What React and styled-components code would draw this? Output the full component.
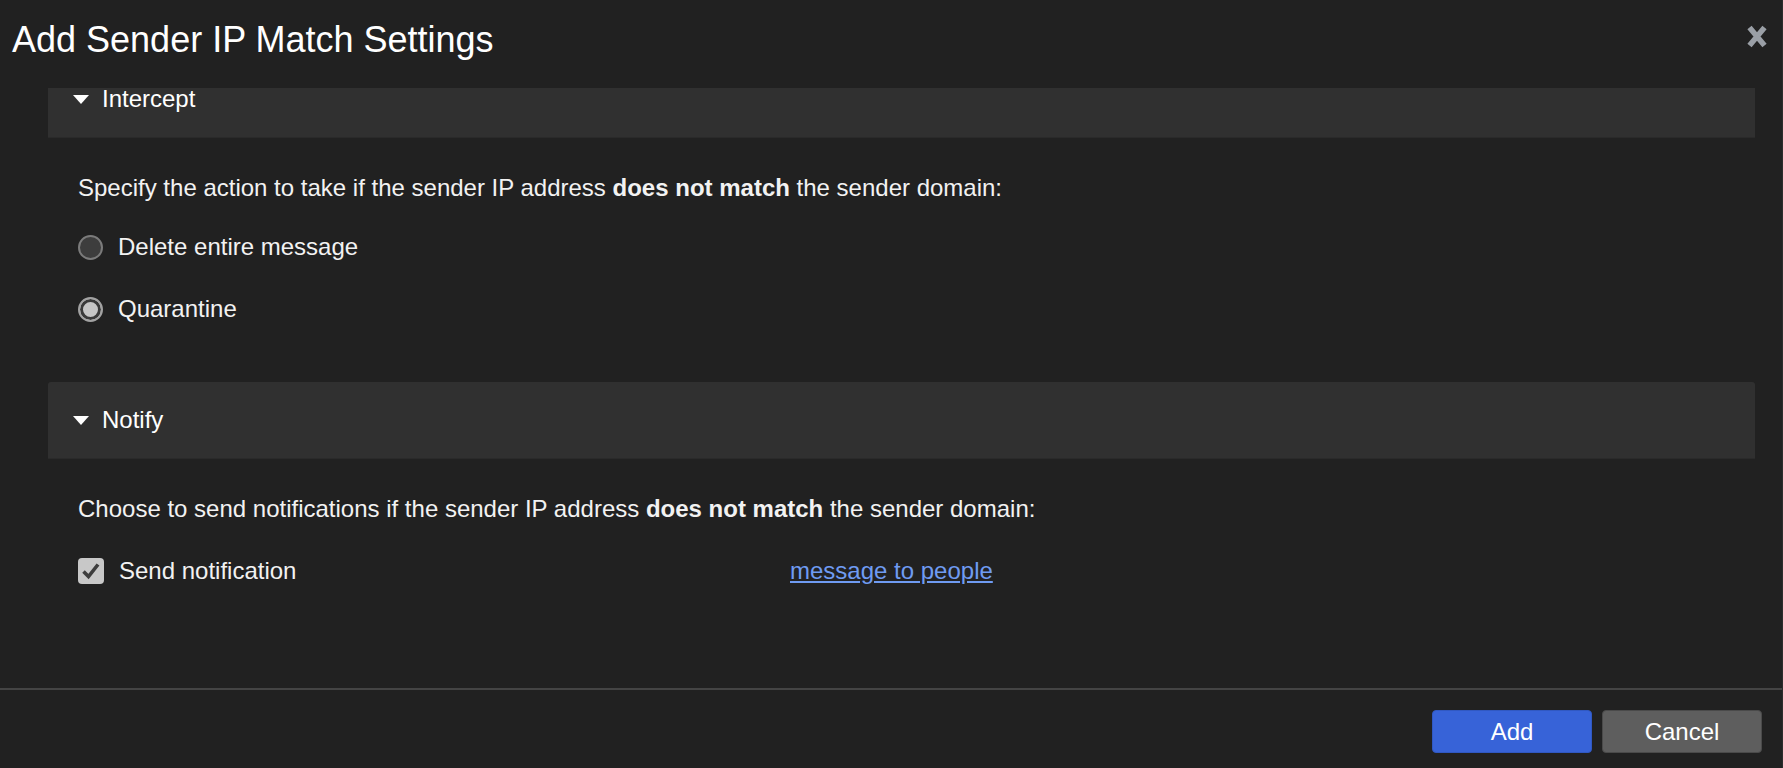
import React from 'react';
import styled, { createGlobalStyle, css } from 'styled-components';

const GlobalStyle = createGlobalStyle`
  html, body {
    margin: 0;
    padding: 0;
    background: #212121;
  }
  body {
    font-family: "Liberation Sans", Arial, sans-serif;
    color: #f2f2f2;
  }
`;

const Dialog = styled.div`
  height: 100vh;
  display: flex;
  flex-direction: column;
  background: #212121;
  border-right: 1px solid #2c2c2c;
  box-sizing: border-box;
`;

const Header = styled.header`
  height: 88px;
  flex: none;
  display: flex;
  justify-content: space-between;
  align-items: flex-start;
  padding: 19px 14px 0 12px;
  box-sizing: border-box;
`;

const Title = styled.h1`
  margin: 0;
  font-size: 36px;
  line-height: 42px;
  font-weight: 400;
  color: #ffffff;
`;

const CloseButton = styled.button`
  margin-top: 5px;
  width: 22px;
  height: 25px;
  padding: 0;
  border: 0;
  background: none;
  cursor: pointer;
  svg {
    display: block;
  }
`;

const Body = styled.div`
  flex: 1;
  overflow: hidden;
  padding: 0 27px 0 48px;
`;

const Sections = styled.div`
  margin-top: -27px;
`;

const SectionHeader = styled.div`
  height: 77px;
  display: flex;
  align-items: center;
  gap: 13px;
  padding-left: 25px;
  background: #303030;
  border-radius: 3px 3px 0 0;
  border-bottom: 1px solid #2a2a2a;
  box-sizing: border-box;
  font-size: 24px;
  line-height: 24px;
  color: #ffffff;
`;

const Caret = styled.span`
  width: 0;
  height: 0;
  border-left: 8px solid transparent;
  border-right: 8px solid transparent;
  border-top: 9px solid #ffffff;
`;

const SectionBody = styled.div`
  display: flex;
  flex-direction: column;
  gap: 28px;
  padding: 36px 0 ${(p) => p.$bottom}px 30px;
`;

const Intro = styled.p`
  margin: 0;
  font-size: 24px;
  line-height: 28px;
  strong {
    font-weight: 700;
  }
`;

const Option = styled.label`
  height: 34px;
  display: flex;
  align-items: center;
  gap: 15px;
  font-size: 24px;
`;

const Radio = styled.span`
  width: 25px;
  height: 25px;
  border-radius: 50%;
  box-sizing: border-box;
  ${(p) =>
    p.$checked
      ? css`
          border: 2px solid #a2a2a2;
          background: #c6c6c6;
          box-shadow: inset 0 0 0 3px #3a3a3a;
        `
      : css`
          border: 2px solid #7b7b7b;
          background: #3d3d3d;
        `}
`;

const Checkbox = styled.span`
  width: 26px;
  height: 26px;
  border-radius: 4px;
  background: #c8c8c8;
  display: flex;
  align-items: center;
  justify-content: center;
`;

const NotifyRow = styled.div`
  margin-top: 3px;
  display: grid;
  grid-template-columns: 712px auto;
  align-items: center;
`;

const Link = styled.a`
  font-size: 24px;
  color: #6f9bf2;
  text-decoration: underline;
  cursor: pointer;
`;

const Footer = styled.footer`
  height: 80px;
  flex: none;
  border-top: 2px solid #444444;
  box-sizing: border-box;
  display: flex;
  justify-content: flex-end;
  align-items: flex-start;
  gap: 10px;
  padding: 20px 20px 0 0;
`;

const Button = styled.button`
  width: 160px;
  height: 43px;
  border-radius: 4px;
  font-family: "Liberation Sans", Arial, sans-serif;
  font-size: 24px;
  color: #ffffff;
  cursor: pointer;
  background: ${(p) => (p.$primary ? '#3763d8' : '#5e5e5e')};
  border: 1px solid ${(p) => (p.$primary ? '#3058c2' : '#4a4a4a')};
`;

const CloseIcon = () => (
  <svg width="22" height="25" viewBox="0 0 22 25">
    <path d="M3.5 3.5 L18.5 21.5 M18.5 3.5 L3.5 21.5" stroke="#9a9fa6" strokeWidth="5.5" />
  </svg>
);

const CheckIcon = () => (
  <svg width="22" height="22" viewBox="0 0 22 22">
    <path d="M3.5 11.5 L8.5 16.5 L18 4.5" fill="none" stroke="#3d3d3d" strokeWidth="3.6" />
  </svg>
);

const App = () => {
  const actions = [
    { label: 'Delete entire message', checked: false },
    { label: 'Quarantine', checked: true },
  ];

  return (
    <>
      <GlobalStyle />
      <Dialog>
        <Header>
          <Title>Add Sender IP Match Settings</Title>
          <CloseButton aria-label="Close">
            <CloseIcon />
          </CloseButton>
        </Header>

        <Body>
          <Sections>
            <section>
              <SectionHeader>
                <Caret />
                <span>Intercept</span>
              </SectionHeader>
              <SectionBody $bottom={56}>
                <Intro>
                  Specify the action to take if the sender IP address <strong>does not match</strong> the sender domain:
                </Intro>
                {actions.map(({ label, checked }) => (
                  <Option key={label}>
                    <Radio $checked={checked} />
                    {label}
                  </Option>
                ))}
              </SectionBody>
            </section>

            <section>
              <SectionHeader>
                <Caret />
                <span>Notify</span>
              </SectionHeader>
              <SectionBody $bottom={40}>
                <Intro>
                  Choose to send notifications if the sender IP address <strong>does not match</strong> the sender domain:
                </Intro>
                <NotifyRow>
                  <Option>
                    <Checkbox>
                      <CheckIcon />
                    </Checkbox>
                    Send notification
                  </Option>
                  <Link>message to people</Link>
                </NotifyRow>
              </SectionBody>
            </section>
          </Sections>
        </Body>

        <Footer>
          <Button $primary>Add</Button>
          <Button>Cancel</Button>
        </Footer>
      </Dialog>
    </>
  );
};

export default App;
